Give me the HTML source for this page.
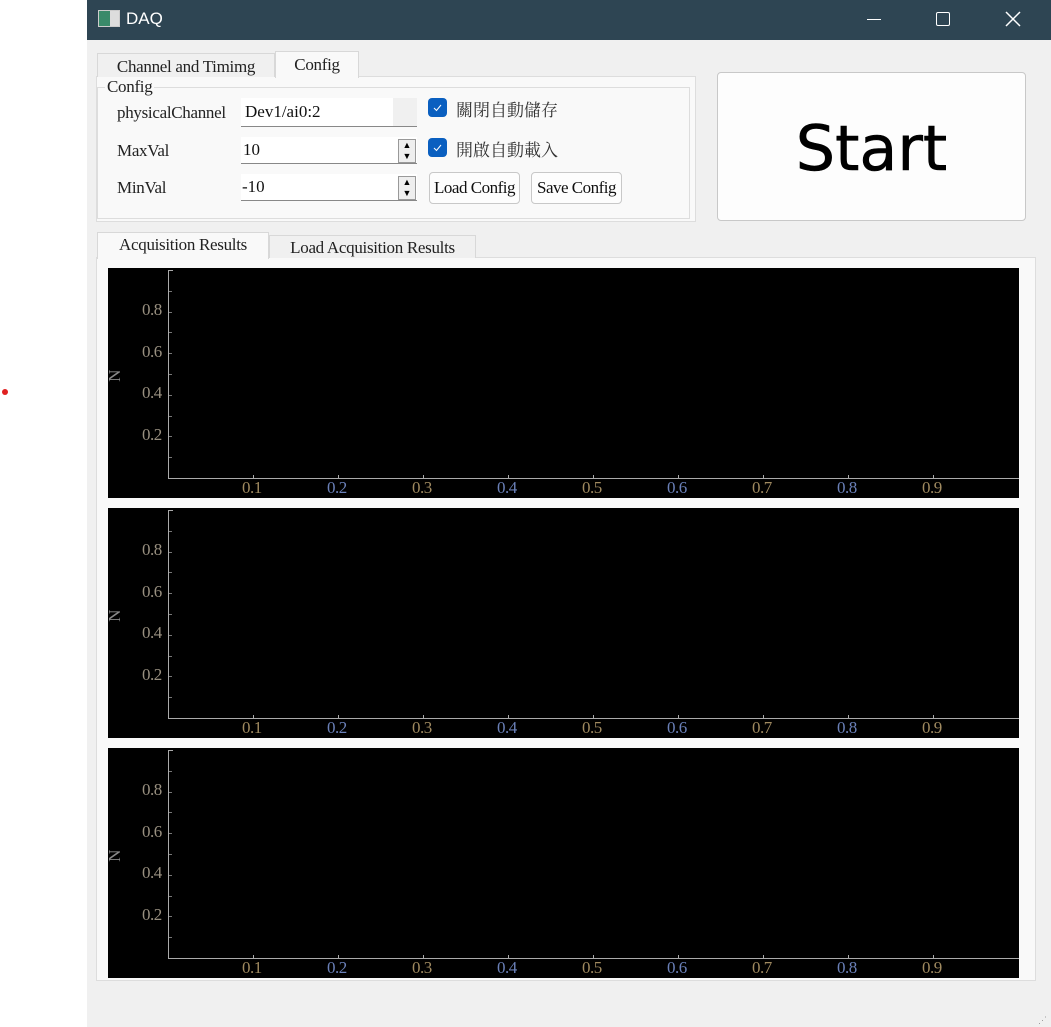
<!DOCTYPE html>
<html><head><meta charset="utf-8"><style>
body{margin:0;width:1051px;height:1027px;background:#fff;position:relative;overflow:hidden;font-family:"Liberation Serif","Noto Serif CJK SC",serif;}
.a{position:absolute;}
.win{left:87px;top:0;width:964px;height:1027px;background:#f0f0f0;}
.title{left:87px;top:0;width:964px;height:40px;background:#2e4553;color:#fff;font-family:"Liberation Sans",sans-serif;font-size:17px;}
.tab{background:#f0f0f0;border:1px solid #d8d8d8;border-bottom:none;font-size:17px;color:#222;text-align:center;letter-spacing:-0.3px;}
.inp{background:#fff;border-bottom:1px solid #888;font-size:17px;color:#111;}
.lbl{font-size:17px;color:#222;letter-spacing:-0.3px;}
.btn{background:#fdfdfd;border:1px solid #c8c8c8;border-radius:4px;font-size:17px;color:#111;text-align:center;letter-spacing:-0.5px;}
.cb{width:19px;height:19px;background:#0a5fc0;border-radius:4px;}
.plot{left:108px;width:911px;height:230px;background:#000;}
.yl{position:absolute;left:168px;top:2px;width:0;height:208px;border-left:1px solid #aaa;}
.xl{position:absolute;left:168px;top:210px;width:742px;height:0;border-top:1px solid #aaa;}
.t{position:absolute;font-size:17px;letter-spacing:-0.5px;}
</style></head><body>
<div class="a" style="left:2px;top:389px;width:6px;height:6px;border-radius:3px;background:#e02020"></div>
<div class="a win"></div>
<div class="a title">
 <div class="a" style="left:11px;top:10px;width:20px;height:15px;background:linear-gradient(90deg,#3a8a6a 0 55%,#ddd 55%);border:1px solid #ccc"></div>
 <div class="a" style="left:39px;top:9px">DAQ</div>
 <div class="a" style="left:780px;top:19px;width:14px;border-top:1px solid #fff"></div>
 <div class="a" style="left:849px;top:12px;width:12px;height:12px;border:1.5px solid #fff;border-radius:2px"></div>
 <svg class="a" style="left:918px;top:11px" width="16" height="16"><path d="M1 1L15 15M15 1L1 15" stroke="#fff" stroke-width="1.5"/></svg>
</div>
<div class="a" style="left:96px;top:76px;width:598px;height:144px;background:#f9f9f9;border:1px solid #ddd"></div>
<div class="a tab" style="left:97px;top:53px;width:176px;height:23px;line-height:26px">Channel and Timimg</div>
<div class="a tab" style="left:275px;top:51px;width:82px;height:26px;line-height:25px;background:#f9f9f9">Config</div>
<div class="a" style="left:97px;top:87px;width:591px;height:130px;border:1px solid #ddd"></div>
<div class="a lbl" style="left:105px;top:77px;background:#f9f9f9;padding:0 2px">Config</div>
<div class="a lbl" style="left:117px;top:103px">physicalChannel</div>
<div class="a lbl" style="left:117px;top:141px">MaxVal</div>
<div class="a lbl" style="left:117px;top:178px">MinVal</div>
<div class="a inp" style="left:241px;top:98px;width:176px;height:28px;background:linear-gradient(90deg,#fff 0 152px,#f0f0f0 152px)"><span style="position:absolute;left:4px;top:4px">Dev1/ai0:2</span></div>
<div class="a inp" style="left:241px;top:137px;width:176px;height:26px"><span style="position:absolute;left:2px;top:3px">10</span></div>
<div class="a inp" style="left:241px;top:174px;width:176px;height:26px"><span style="position:absolute;left:1px;top:3px">-10</span></div>
<div class="a" style="left:398px;top:139px;width:16px;height:22px;border:1px solid #999;background:#eee;font-size:9px;line-height:11px;text-align:center">▲<br>▼</div>
<div class="a" style="left:398px;top:176px;width:16px;height:22px;border:1px solid #999;background:#eee;font-size:9px;line-height:11px;text-align:center">▲<br>▼</div>
<div class="a cb" style="left:428px;top:98px"><svg width="19" height="19"><path d="M6 10l2.5 2.5L13 7" stroke="#fff" fill="none" stroke-width="1"/></svg></div>
<div class="a cb" style="left:428px;top:138px"><svg width="19" height="19"><path d="M6 10l2.5 2.5L13 7" stroke="#fff" fill="none" stroke-width="1"/></svg></div>
<div class="a" style="left:456px;top:96px;font-family:'Noto Serif CJK SC','Noto Sans CJK TC',serif;font-size:17px;color:#333">關閉自動儲存</div>
<div class="a" style="left:456px;top:136px;font-family:'Noto Serif CJK SC','Noto Sans CJK TC',serif;font-size:17px;color:#333">開啟自動載入</div>
<div class="a btn" style="left:429px;top:172px;width:89px;height:30px;line-height:30px">Load Config</div>
<div class="a btn" style="left:531px;top:172px;width:89px;height:30px;line-height:30px">Save Config</div>
<div class="a btn" style="left:717px;top:72px;width:307px;height:147px;line-height:152px;font-family:'DejaVu Sans',sans-serif;font-size:62px;color:#000;letter-spacing:0;font-weight:500;-webkit-text-stroke:0.6px #000">Start</div>
<div class="a" style="left:96px;top:257px;width:938px;height:722px;background:#f9f9f9;border:1px solid #ddd"></div>
<div class="a tab" style="left:97px;top:232px;width:170px;height:26px;line-height:24px;background:#f9f9f9">Acquisition Results</div>
<div class="a tab" style="left:269px;top:235px;width:205px;height:22px;line-height:24px">Load Acquisition Results</div>
<div class="a" style="left:1038px;top:1015px;width:10px;height:10px;color:#999;font-size:9px">⋰</div>
<div id="plots"></div>
<script>
var h='';[268,508,748].forEach(function(T){
h+='<div class="a plot" style="top:'+T+'px"><div class="yl" style="left:60px"></div><div class="xl" style="left:60px;width:851px"></div>';
h+='<div style="position:absolute;left:60px;top:2px;width:5px;border-top:1px solid #aaa"></div>';
[[0.8,43],[0.6,85],[0.4,126],[0.2,168]].forEach(function(v){h+='<div class="t" style="left:34px;top:'+(v[1]-11)+'px;color:#999080">'+v[0]+'</div>';});
for(var i=1;i<10;i++){var y=2+i*20.8;h+='<div style="position:absolute;left:61px;top:'+y+'px;width:3px;border-top:1px solid #777"></div>';}
var cols=['#a08a60','#6a80b8','#a08a60','#6a80b8','#a08a60','#6a80b8','#a08a60','#6a80b8','#a08a60'];
for(var i=1;i<10;i++){var x=60+i*85;h+='<div style="position:absolute;left:'+x+'px;top:207px;height:3px;border-left:1px solid #aaa"></div><div class="t" style="left:'+(x-11)+'px;top:210px;color:'+cols[i-1]+'">0.'+i+'</div>';}
h+='<div class="t" style="left:1px;top:98px;color:#888;transform:rotate(-90deg)">N</div></div>';});
document.getElementById('plots').innerHTML=h;
</script>
</body></html>
